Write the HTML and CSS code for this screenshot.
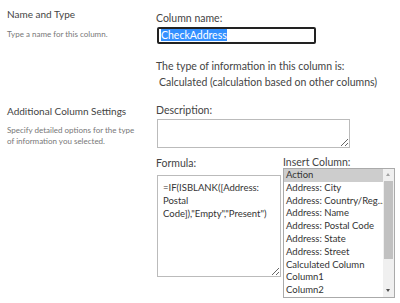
FILE: index.html
```html
<!DOCTYPE html>
<html lang="en">
<head>
    <meta charset="UTF-8">
    <title>Column Settings</title>
    <link rel="stylesheet" href="styles.css">
</head>
<body>
    <div class="section first">
        <div class="side">
            <h3>Name and Type</h3>
            <p>Type a name for this column.</p>
        </div>
        <div class="main">
            <label>Column name:</label>
            <div class="name-box"><span class="sel">CheckAddress</span></div>
            <div class="type-label">The type of information in this column is:</div>
            <div class="type-value">Calculated (calculation based on other columns)</div>
        </div>
    </div>

    <div class="section">
        <div class="side">
            <h3>Additional Column Settings</h3>
            <p>Specify detailed options for the type of information you selected.</p>
        </div>
        <div class="main">
            <label>Description:</label>
            <textarea class="desc" readonly></textarea>
            <div class="formula-row">
                <div class="formula-col">
                    <label>Formula:</label>
                    <textarea class="formula" readonly>=IF(ISBLANK([Address: Postal Code]),"Empty","Present")</textarea>
                </div>
                <div class="insert-col">
                    <label>Insert Column:</label>
                    <div class="listbox">
                        <ul>
                            <li class="active">Action</li>
                            <li>Address: City</li>
                            <li>Address: Country/Reg...</li>
                            <li>Address: Name</li>
                            <li>Address: Postal Code</li>
                            <li>Address: State</li>
                            <li>Address: Street</li>
                            <li>Calculated Column</li>
                            <li>Column1</li>
                            <li>Column2</li>
                        </ul>
                        <div class="scrollbar">
                            <span class="arrow up"></span>
                            <div class="track"><div class="thumb"></div></div>
                            <span class="arrow down"></span>
                        </div>
                    </div>
                </div>
            </div>
        </div>
    </div>
</body>
</html>
```

FILE: styles.css
```css
body {
    margin: 0;
    background: #fff;
    font-family: Lato, "Noto Sans", sans-serif;
    color: #444;
}
.section {
    display: grid;
    grid-template-columns: 156px 1fr;
}
.first {
    padding-top: 8px;
    height: 95px;
}
.side {
    padding-left: 7px;
}
.side h3 {
    margin: 0;
    font-size: 10px;
    font-weight: normal;
    color: #444;
}
.side p {
    margin: 9px 0 0;
    font-size: 8px;
    line-height: 11px;
    color: #777;
    width: 130px;
}
.section:not(.first) .side h3 {
    margin-top: 2px;
}
.section:not(.first) .side p {
    margin-top: 8px;
}
.main label {
    display: block;
    font-size: 10.5px;
    line-height: 14px;
}
.first .main label {
    margin-top: 3px;
}
.name-box {
    width: 151px;
    height: 13px;
    margin: 2px 0 0 1px;
    border: 2px solid #222;
    border-radius: 2px;
    padding: 0 2px;
    font-size: 10.5px;
    line-height: 13px;
}
.sel {
    background: #3390ff;
    color: #fff;
}
.type-label {
    margin-top: 14px;
    font-size: 10.5px;
    line-height: 16px;
}
.type-value {
    padding-left: 3px;
    font-size: 10.5px;
    line-height: 16px;
}
textarea {
    display: block;
    box-sizing: border-box;
    margin: 0 0 0 1px;
    border: 1px solid #bbb;
    font-family: Lato, "Noto Sans", sans-serif;
    color: #333;
    resize: both;
    outline: none;
}
.desc {
    width: 193px;
    height: 29px;
    margin-top: 2px;
}
.formula-row {
    display: flex;
    gap: 3px;
    margin-top: 8px;
}
.formula-col {
    width: 124px;
}
.formula {
    width: 124px;
    height: 102px;
    margin-top: 5px;
    padding: 5px 5px;
    font-size: 9.5px;
    line-height: 13px;
}
.insert-col {
    margin-top: -1px;
}
.listbox {
    display: flex;
    width: 112px;
    height: 130px;
    margin-top: -1px;
    border: 1px solid #aaa;
    box-sizing: border-box;
}
.listbox ul {
    flex: 1;
    margin: 0;
    padding: 0;
    list-style: none;
    overflow: hidden;
}
.listbox li {
    padding-left: 2px;
    font-size: 9.5px;
    line-height: 12.8px;
    height: 12.8px;
    white-space: nowrap;
    color: #333;
}
.listbox li.active {
    background: #cdcdcd;
}
.scrollbar {
    width: 11px;
    display: flex;
    flex-direction: column;
    background: #f0f0f0;
}
.arrow {
    height: 12px;
    position: relative;
}
.arrow::after {
    content: "";
    position: absolute;
    left: 3px;
    top: 4px;
    border-left: 2.5px solid transparent;
    border-right: 2.5px solid transparent;
}
.arrow.up::after {
    border-bottom: 3px solid #a3a3a3;
}
.arrow.down::after {
    border-top: 3px solid #505050;
}
.track {
    flex: 1;
}
.thumb {
    height: 78px;
    margin: 0 1px;
    background: #c1c1c1;
}
```
